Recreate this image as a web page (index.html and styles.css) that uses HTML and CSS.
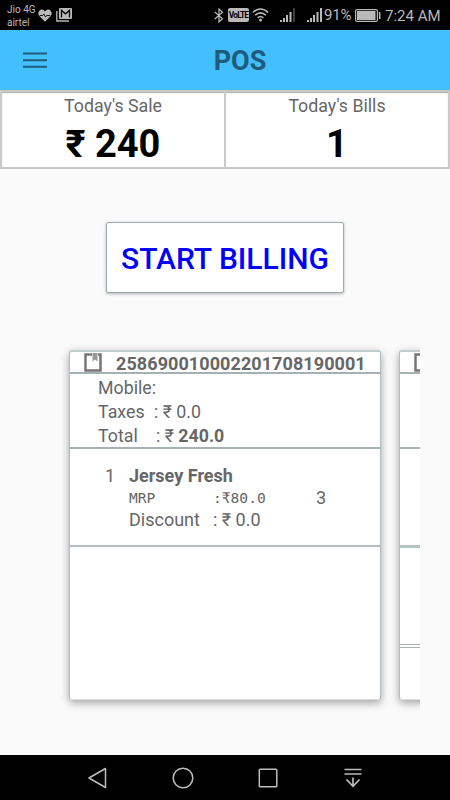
FILE: index.html
```html
<!DOCTYPE html>
<html lang="en">
<head>
    <meta charset="UTF-8">
    <meta name="viewport" content="width=device-width, initial-scale=1.0">
    <title>POS</title>
    <link rel="stylesheet" href="styles.css">
</head>
<body>

<div class="status-bar">
    <div class="carrier">
        <div>Jio 4G</div>
        <div>airtel</div>
    </div>
    <svg class="icon-heart" width="14" height="13" viewBox="0 0 16 14">
        <path d="M8 14L1.500 7.700C-1.500 4 2-1.200 6 .6L8 2 10 .6C14-1.200 17.500 4 14.500 7.700Z" fill="#b9b9b9"/>
        <path d="M2 7H5.500L6.800 5.200 8.600 8.800 10 7H14" fill="none" stroke="#000" stroke-width="1"/>
    </svg>
    <svg class="icon-mail" width="16" height="14" viewBox="0 0 16 14">
        <path d="M.8 3V13H13" fill="none" stroke="#b9b9b9" stroke-width="1.300"/>
        <rect x="3" y="0" width="13" height="11" rx="1" fill="#b9b9b9"/>
        <path d="M5.500 9.500V2.500L9.500 5.800 13.500 2.500V9.500" fill="none" stroke="#000" stroke-width="1.300"/>
    </svg>
    <svg class="icon-bluetooth" width="10" height="15" viewBox="0 0 10 15">
        <path d="M.8 4L8.500 10.800 5 14V1L8.500 4.200.8 11" fill="none" stroke="#b9b9b9" stroke-width="1.200"/>
    </svg>
    <span class="volte">VoLTE</span>
    <svg class="icon-wifi" width="17" height="14" viewBox="0 0 17 14">
        <path d="M.8 4.500Q8.500-2.500 16.200 4.500M3.200 7.200Q8.500 2.400 13.800 7.200M5.600 9.800Q8.500 7.200 11.400 9.800" fill="none" stroke="#b9b9b9" stroke-width="1.600"/>
        <circle cx="8.500" cy="12" r="1.500" fill="#b9b9b9"/>
    </svg>
    <svg class="icon-signal" width="15" height="14" viewBox="0 0 15 14">
        <path d="M0 12H2V14H0ZM3 10H5V14H3ZM6 7H8V14H6ZM9.500 4H11.500V14H9.500Z" fill="#b9b9b9"/>
        <path d="M13 0H15V14H13Z" fill="#3c3c3c"/>
    </svg>
    <svg class="icon-signal2" width="15" height="14" viewBox="0 0 15 14">
        <path d="M0 12H2V14H0ZM3 10H5V14H3ZM6 7H8V14H6ZM9.500 4H11.500V14H9.500ZM13 0H15V14H13Z" fill="#b9b9b9"/>
    </svg>
    <span class="percent">91%</span>
    <svg class="icon-battery" width="26" height="13" viewBox="0 0 26 13">
        <rect x=".6" y=".6" width="21.800" height="11.800" rx="1.500" fill="none" stroke="#b9b9b9" stroke-width="1.200"/>
        <rect x="2" y="2" width="18.500" height="9" fill="#b9b9b9"/>
        <path d="M24.700 3V10" stroke="#b9b9b9" stroke-width="1.500"/>
    </svg>
    <span class="clock">7:24 AM</span>
</div>

<div class="toolbar">
    <svg class="menu" width="24" height="17" viewBox="0 0 24 17">
        <path d="M0 1.500H24M0 8.200H24M0 14.700H24" stroke="#1f5c7b" stroke-width="2"/>
    </svg>
    <h1>POS</h1>
</div>

<div class="summary">
    <div class="summary-box">
        <div class="summary-label">Today's Sale</div>
        <div class="summary-value">₹ 240</div>
    </div>
    <div class="summary-box">
        <div class="summary-label">Today's Bills</div>
        <div class="summary-value">1</div>
    </div>
</div>

<div class="content">
    <button type="button" class="start-billing">START BILLING</button>

    <div class="bills">
        <div class="card">
            <div class="card-header">
                <svg class="bookmark" width="18" height="19" viewBox="0 0 18 19">
                    <path d="M8 1.500H1.500V17.500H16.500V1.500H14" fill="none" stroke="#777" stroke-width="2.500"/>
                    <path d="M8.500 0H13.500V8.500L11 6.500 8.500 8.500Z" fill="#999"/>
                </svg>
                <span>258690010002201708190001</span>
            </div>
            <div class="card-info">
                <div><span>Mobile:</span></div>
                <div><span class="info-name">Taxes</span>: ₹ 0.0</div>
                <div><span class="info-name info-total">Total</span>: ₹ <b>240.0</b></div>
            </div>
            <div class="card-item">
                <div class="item-no">1</div>
                <div class="item-detail">
                    <div class="item-title">Jersey Fresh</div>
                    <div class="item-mrp"><span class="item-name">MRP</span>:₹80.0</div>
                    <div class="item-discount"><span class="item-name">Discount</span>: ₹ 0.0</div>
                </div>
                <div class="item-qty">3</div>
            </div>
        </div>
        <div class="card">
            <div class="card-header">
                <svg class="bookmark" width="18" height="19" viewBox="0 0 18 19">
                    <path d="M8 1.500H1.500V17.500H16.500V1.500H14" fill="none" stroke="#777" stroke-width="2.500"/>
                    <path d="M8.500 0H13.500V8.500L11 6.500 8.500 8.500Z" fill="#999"/>
                </svg>
            </div>
            <div class="card-info"></div>
            <div class="card-item card-item-first"></div>
            <div class="card-item card-item-double"></div>
        </div>
    </div>
</div>

<div class="nav-bar">
    <svg width="22" height="22" viewBox="0 0 22 22">
        <path d="M18.500 1.500V20.500L2 11Z" fill="none" stroke="#bdbdbd" stroke-width="1.500" stroke-linejoin="round"/>
    </svg>
    <svg width="22" height="22" viewBox="0 0 22 22">
        <circle cx="11" cy="11" r="9.800" fill="none" stroke="#bdbdbd" stroke-width="1.500"/>
    </svg>
    <svg width="22" height="22" viewBox="0 0 22 22">
        <rect x="2.300" y="2.300" width="17.500" height="17.500" rx=".8" fill="none" stroke="#bdbdbd" stroke-width="1.500"/>
    </svg>
    <svg width="22" height="22" viewBox="0 0 22 22">
        <path d="M2.500 2.500H19.500M2.500 7H19.500M11 10.500V19M4.500 12.500L11 19.300 17.500 12.500" fill="none" stroke="#bdbdbd" stroke-width="1.700"/>
    </svg>
</div>

</body>
</html>
```
FILE: styles.css
```css
body {
    font-family: Roboto, "Liberation Sans", sans-serif;
    background-color: #fafafa;
    color: #666;
    margin: 0;
    height: 800px;
    display: flex;
    flex-direction: column;
    overflow: hidden;
}

.status-bar {
    display: flex;
    align-items: center;
    height: 30px;
    background-color: #000;
    color: #b9b9b9;
    flex: none;
}

.status-bar svg,
.status-bar span {
    flex: none;
}

.carrier {
    width: 30px;
    padding-left: 7px;
    padding-top: 1px;
    font-size: 10px;
    line-height: 13px;
    white-space: nowrap;
}

.icon-heart {
    margin-left: 1px;
}

.icon-mail {
    margin-left: 4px;
}

.icon-bluetooth {
    margin-left: 142px;
}

.volte {
    width: 21px;
    height: 14px;
    margin-left: 4px;
    border-radius: 2px;
    background-color: #b9b9b9;
    color: #000;
    font-size: 8.3px;
    font-weight: bold;
    line-height: 14px;
    text-align: center;
    letter-spacing: -0.8px;
}

.icon-wifi {
    margin-left: 3px;
}

.icon-signal {
    margin-left: 11px;
}

.icon-signal2 {
    margin-left: 12px;
}

.percent {
    width: 28px;
    margin-left: 2px;
    font-size: 15px;
    letter-spacing: -0.2px;
}

.icon-battery {
    margin-left: 3px;
}

.clock {
    margin-left: 4px;
    font-size: 15px;
    padding-top: 2px;
    white-space: nowrap;
}

.toolbar {
    display: grid;
    grid-template-columns: 60px 1fr 30px;
    align-items: center;
    height: 60px;
    background-color: #43bffe;
    flex: none;
}

.menu {
    margin-left: 23px;
}

.toolbar h1 {
    margin: 0;
    padding-top: 2px;
    color: #1f5c7b;
    font-size: 27px;
    line-height: 32px;
    font-weight: bold;
    text-align: center;
}

.summary {
    display: grid;
    grid-template-columns: 224px 1fr;
    height: 79px;
    box-sizing: border-box;
    background-color: #fff;
    border: 2px solid #c9c9c9;
    box-shadow: inset 0 1px 1px #aaa;
    flex: none;
}

.summary-box {
    text-align: center;
}

.summary-box:first-child {
    border-right: 2px solid #c9c9c9;
}

.summary-label {
    font-size: 17.8px;
    line-height: 22px;
    padding-top: 3px;
}

.summary-value {
    color: #000;
    font-size: 38px;
    font-weight: bold;
    line-height: 44px;
    padding-top: 5px;
}

.content {
    flex: 1;
    min-height: 0;
}

.start-billing {
    display: block;
    width: 238px;
    height: 71px;
    margin: 53px auto 0;
    padding: 2px 0 0;
    background-color: #fff;
    border: 1px solid #9dabae;
    border-radius: 2px;
    box-shadow: 0 1px 3px rgba(0, 0, 0, 0.3);
    color: #0000fe;
    font-family: inherit;
    font-size: 30px;
    font-weight: 500;
    white-space: nowrap;
}

.bills {
    display: flex;
    gap: 18px;
    width: 390px;
    height: 400px;
    margin-top: 37px;
    margin-left: 30px;
    padding: 20px 0 0 39px;
    box-sizing: border-box;
    overflow: hidden;
}

.card {
    width: 312px;
    height: 350px;
    flex: none;
    box-sizing: border-box;
    background-color: #fff;
    border: 1px solid #b0bcbf;
    border-top: 2px solid #c3cccd;
    border-bottom-color: #ddd;
    border-radius: 3px;
    box-shadow: 0 3px 9px rgba(0, 0, 0, 0.35);
}

.card-header {
    display: flex;
    align-items: center;
    height: 20px;
    border-bottom: 2px solid #a5b1b4;
    font-size: 18px;
    font-weight: bold;
    line-height: 20px;
}

.card-header span {
    padding-top: 3px;
    letter-spacing: 0.08px;
}

.bookmark {
    margin-left: 14px;
    margin-right: 14px;
    flex: none;
}

.card-info {
    height: 73px;
    border-bottom: 2px solid #a5b1b4;
    padding-left: 28px;
    font-size: 17.8px;
    line-height: 24px;
}

.card-info div:first-child {
    padding-top: 2px;
}

.info-name {
    display: inline-block;
    width: 56px;
}

.info-total {
    width: 58px;
}

.card-item {
    display: flex;
    height: 96px;
    border-bottom: 2px solid #b3bec0;
    font-size: 18px;
    line-height: 22px;
}

.card-item-first {
    border-bottom: 3px solid #b8c3c5;
}

.card-item-double {
    border-bottom: 4px double #a5b1b4;
}

.item-no {
    width: 24px;
    padding: 16px 0 0 35px;
}

.item-detail {
    width: 187px;
    padding-top: 16px;
}

.item-title {
    font-weight: bold;
}

.item-mrp {
    font-family: "DejaVu Sans Mono", monospace;
    font-size: 14.6px;
}

.item-name {
    display: inline-block;
    width: 84px;
}

.item-qty {
    padding-top: 38px;
}

.nav-bar {
    display: flex;
    align-items: center;
    gap: 63px;
    height: 45px;
    padding-left: 86.5px;
    background-color: #000;
    flex: none;
}
```
